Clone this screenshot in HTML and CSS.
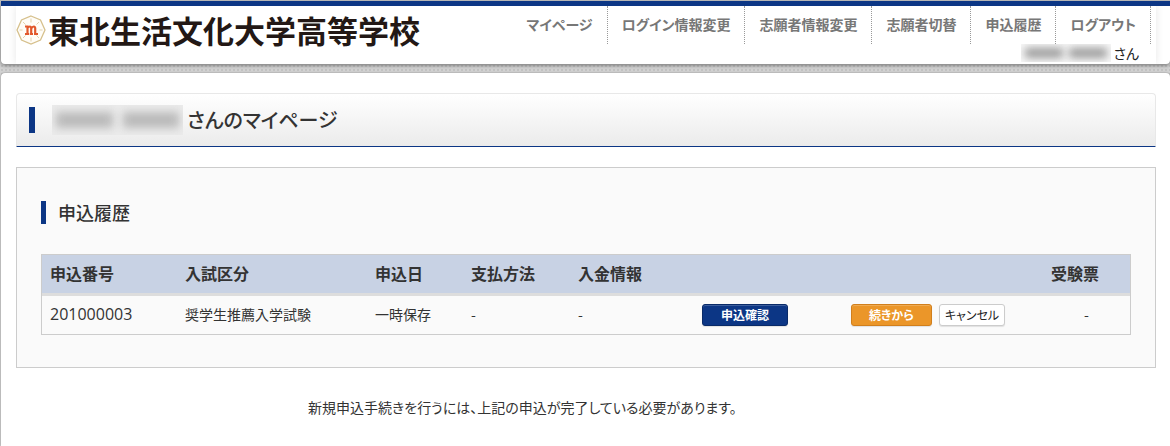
FILE: index.html
```html
<!DOCTYPE html>
<html lang="ja">
<head>
    <meta charset="UTF-8">
    <meta name="viewport" content="width=device-width, initial-scale=1.0">
    <title>マイページ</title>
    <link rel="stylesheet" href="styles.css">
</head>
<body>
    <header class="header">
        <div class="header-inner">
            <div class="logo">
                <svg class="logo-mark" viewBox="0 0 30 30" aria-hidden="true">
                    <path d="M15 1 L24.5 5 L29 15 L24.5 25 L15 29 L5.500 25 L1 15 L5.500 5 Z" fill="#fffdf8" stroke="#d6c08c" stroke-width="1.300"/>
                    <path d="M15 3.500v4M15 22.500v4M3.500 15h3M23.500 15h3M7 7l2.500 2.500M23 7l-2.500 2.500M7 23l2.500-2.500M23 23l-2.500-2.500" stroke="#e3d3ae" fill="none"/>
                    <path d="M9 11.500h2.500v7M9 19h4.200M11.500 13q3-3 3.700 0v6M14 19h3M15.500 13q3-3 3.700 0v6M18 19h4" stroke="#e2582c" stroke-width="2.200" fill="none"/>
                </svg>
                <span class="logo-text">東北生活文化大学高等学校</span>
            </div>
            <div class="header-right">
                <nav class="nav">
                    <a href="#">マイページ</a>
                    <a href="#">ログイン情報変更</a>
                    <a href="#">志願者情報変更</a>
                    <a href="#">志願者切替</a>
                    <a href="#">申込履歴</a>
                    <a href="#">ログアウト</a>
                </nav>
                <div class="user">
                    <span class="masked masked-small"><i></i><i></i></span>
                    <span>さん</span>
                </div>
            </div>
        </div>
    </header>

    <main class="main">
        <h1 class="page-title">
            <span class="masked masked-large"><i></i><i></i></span>
            <span>さんのマイページ</span>
        </h1>

        <section class="panel">
            <h2 class="panel-title">申込履歴</h2>
            <table class="history">
                <colgroup>
                    <col class="col-number">
                    <col class="col-type">
                    <col class="col-date">
                    <col class="col-method">
                    <col class="col-payment">
                    <col class="col-confirm">
                    <col>
                    <col class="col-ticket">
                </colgroup>
                <thead>
                    <tr>
                        <th>申込番号</th>
                        <th>入試区分</th>
                        <th>申込日</th>
                        <th>支払方法</th>
                        <th>入金情報</th>
                        <th></th>
                        <th></th>
                        <th>受験票</th>
                    </tr>
                </thead>
                <tbody>
                    <tr>
                        <td class="number">201000003</td>
                        <td>奨学生推薦入学試験</td>
                        <td>一時保存</td>
                        <td>-</td>
                        <td>-</td>
                        <td><button type="button" class="btn btn-primary">申込確認</button></td>
                        <td>
                            <div class="actions">
                                <button type="button" class="btn btn-warning">続きから</button>
                                <button type="button" class="btn btn-default">キャンセル</button>
                            </div>
                        </td>
                        <td class="ticket">-</td>
                    </tr>
                </tbody>
            </table>
        </section>

        <p class="note">新規申込手続きを行うには、上記の申込が完了している必要があります。</p>
    </main>
</body>
</html>
```

FILE: styles.css
```css
* {
    box-sizing: border-box;
}

body {
    display: flex;
    flex-direction: column;
    min-height: 100vh;
    margin: 0;
    padding-left: 1px;
    border-top: 1px solid #b5b5b5;
    background-color: #d2d2d2;
    background-image: radial-gradient(#c2c2c2 1px, transparent 1px);
    background-size: 4px 4px;
    color: #333;
    font-family: "Noto Sans CJK JP", sans-serif;
    font-size: 14px;
    line-height: 20px;
    font-feature-settings: "palt";
}

/* ヘッダー */
.header {
    padding: 0 14px 0 15px;
    border-top: 5px solid #0c3685;
    border-radius: 0 0 4px 4px;
    background-color: #fff;
    box-shadow: 0 1px 4px rgba(0, 0, 0, 0.5);
    overflow: hidden;
}

.header-inner {
    display: flex;
    justify-content: space-between;
    height: 58px;
    box-shadow: 0 0 8px rgba(0, 0, 0, 0.1);
}

.logo {
    display: flex;
    align-items: center;
    height: 48px;
    gap: 2px;
}

.logo-mark {
    width: 30px;
    height: 30px;
}

.logo-text {
    color: #231815;
    font-size: 31px;
    font-weight: bold;
    line-height: 40px;
    white-space: nowrap;
}

.header-right {
    padding-right: 5px;
}

.nav {
    display: flex;
    justify-content: flex-end;
}

.nav a {
    height: 38px;
    padding: 8px 14px;
    border-right: 1px dotted #999;
    color: #777;
    font-weight: bold;
    text-decoration: none;
    white-space: nowrap;
}

.user {
    display: flex;
    justify-content: flex-end;
    gap: 2px;
    padding-right: 12px;
    color: #222;
    line-height: 18px;
}

/* 氏名のマスク表示 */
.masked {
    display: flex;
    align-items: center;
    overflow: hidden;
}

.masked i {
    filter: blur(4px);
}

.masked-small {
    width: 90px;
    height: 18px;
    gap: 6px;
    padding: 0 4px;
    background-color: #f8f8f8;
}

.masked-small i {
    flex: 1;
    height: 10px;
    background-color: #999;
}

.masked-large {
    width: 131px;
    height: 30px;
    gap: 10px;
    padding: 0 4px;
    background-color: #ebebeb;
}

.masked-large i {
    flex: 1;
    height: 16px;
    background-color: #bbb;
}

/* メイン */
.main {
    flex: 1;
    margin-top: 9px;
    padding: 20px 14px 20px 15px;
    border-radius: 4px 4px 0 0;
    background-color: #fff;
    box-shadow: 0 0 2px rgba(0, 0, 0, 0.4);
}

.page-title {
    display: flex;
    align-items: center;
    gap: 4px;
    height: 54px;
    margin: 0 0 20px;
    padding-left: 12px;
    border: 1px solid #e8e8e8;
    border-bottom-color: #0c3685;
    border-radius: 4px 4px 0 0;
    background: linear-gradient(#fff, #ebebeb);
    font-size: 20px;
    font-weight: 500;
    line-height: 28px;
}

.page-title::before {
    content: "";
    width: 6px;
    height: 26px;
    margin-right: 13px;
    background-color: #0c3685;
}

.panel {
    padding: 33px 24px 32px;
    border: 1px solid #ccc;
    background-color: #fafafa;
}

.panel-title {
    margin: 0 0 30px;
    padding-left: 12px;
    border-left: 5px solid #0c3685;
    font-size: 18px;
    font-weight: 500;
    line-height: 23px;
}

.history {
    width: 100%;
    table-layout: fixed;
    border: 1px solid #ccc;
    border-spacing: 0;
}

.col-number { width: 135px; }
.col-type { width: 190px; }
.col-date { width: 96px; }
.col-method { width: 107px; }
.col-payment { width: 124px; }
.col-confirm { width: 149px; }
.col-ticket { width: 87px; }

.history th {
    height: 41px;
    padding: 0 8px 2px;
    border-bottom: 3px solid #ddd;
    background-color: #c8d2e4;
    font-size: 16px;
    font-weight: bold;
    text-align: left;
}

.history td {
    height: 38px;
    padding: 0 8px;
    line-height: 18px;
}

.history td:not(:has(.btn)) {
    padding-bottom: 3px;
}

.history .number {
    font-family: "Open Sans", "Noto Sans CJK JP", sans-serif;
    font-size: 16px;
}

.history .ticket {
    text-align: center;
}

.actions {
    display: flex;
    gap: 7px;
}

.btn {
    display: block;
    height: 22px;
    padding: 0 18px;
    border: 1px solid;
    border-radius: 3px;
    font-family: inherit;
    font-size: 12px;
    font-weight: bold;
    line-height: 20px;
    font-feature-settings: inherit;
    box-shadow: inset 0 1px 0 rgba(255, 255, 255, 0.2), 0 1px 1px rgba(0, 0, 0, 0.1);
    white-space: nowrap;
    cursor: pointer;
}

.btn-primary {
    border-color: #092a68;
    background-color: #0c3685;
    color: #fff;
}

.btn-warning {
    padding: 0 17px;
    border-color: #d17f1c;
    background-color: #eb9629;
    color: #fff;
}

.btn-default {
    padding: 0 5px;
    border-color: #ccc;
    background-color: #fff;
    color: #222;
    font-weight: normal;
}

.note {
    margin: 29px 0 0 292px;
}
```
